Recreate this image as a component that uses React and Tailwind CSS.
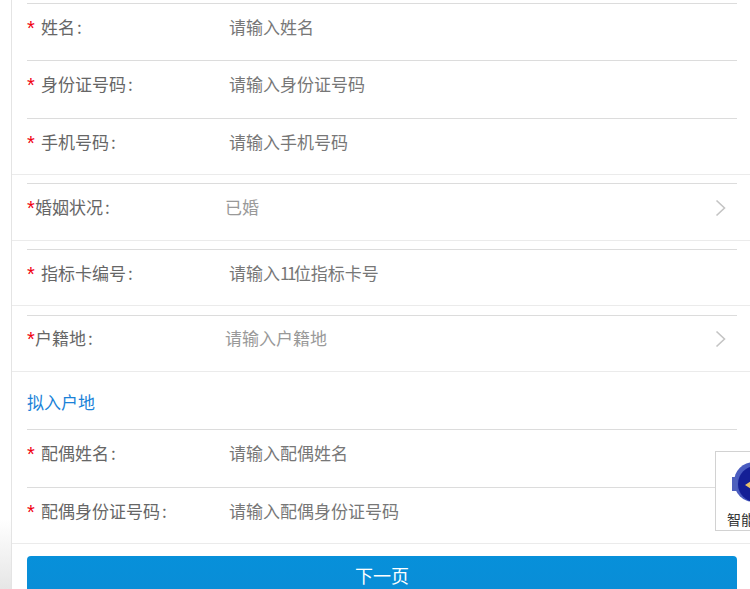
import React from 'react';

const font = "font-['Noto_Sans_CJK_SC','Noto_Sans',sans-serif]";

const Star = ({ width }) => (
  <span className={`h-[16px] text-[20px] leading-[19px] text-[#f0000f] font-['Liberation_Sans',sans-serif] ${width}`}>*</span>
);

const InputRow = ({ label, placeholder, height, pad = 'pb-[11px]' }) => (
  <div className={`ml-[15px] mr-[13px] flex items-center border-t border-[#dcdcdc] ${pad} ${height}`}>
    <div className="flex w-[203px] shrink-0 items-center text-[#666]">
      <Star width="w-[14px]" />
      <span>{label}</span>
      <span className="ml-[2px]">:</span>
    </div>
    <span className="-ml-[1px] text-[#777]">{placeholder}</span>
  </div>
);

const SelectRow = ({ label, value, height }) => (
  <div className={`ml-[15px] mr-[13px] flex items-center border-t border-[#dcdcdc] pb-[11px] ${height}`}>
    <div className="flex w-[198px] shrink-0 items-center text-[#666]">
      <Star width="w-[8px]" />
      <span>{label}</span>
      <span className="ml-[2px]">:</span>
    </div>
    <span className="flex-1 text-[#999]">{value}</span>
    <svg width="12" height="18" viewBox="0 0 12 18" fill="none" className="mr-[10px] mt-[2px]">
      <path d="M1.5 1.5 L9.5 9 L1.5 16.5" stroke="#c4c4c4" strokeWidth="1.6" />
    </svg>
  </div>
);

const Divider = ({ gap }) => <div className={`border-b border-[#ebebeb] ${gap}`} />;

const App = () => {
  return (
    <div className={`relative h-[589px] overflow-hidden bg-white text-[17px] ${font}`}>
      <div className="absolute bottom-0 left-0 h-[70px] w-[11px] bg-gradient-to-b from-white to-[#e6e6e6]" />
      <div className="ml-[11px] h-full border-l border-[#e4e4e4] pt-[3px]">
        <InputRow label="姓名" placeholder="请输入姓名" height="h-[57px]" />
        <InputRow label="身份证号码" placeholder="请输入身份证号码" height="h-[58px]" />
        <InputRow label="手机号码" placeholder="请输入手机号码" height="h-[56px]" pad="pb-[9px]" />
        <Divider gap="mb-[8px]" />
        <SelectRow label="婚姻状况" value="已婚" height="h-[57px]" />
        <Divider gap="mb-[8px]" />
        <InputRow
          label="指标卡编号"
          placeholder={<>请输入<span className="tracking-[-2.5px]">11</span>位指标卡号</>}
          height="h-[56px]"
          pad="pb-[9px]"
        />
        <Divider gap="mb-[9px]" />
        <SelectRow label="户籍地" value="请输入户籍地" height="h-[56px]" />
        <Divider gap="" />
        <div className="ml-[15px] flex h-[57px] items-center pt-[2px] text-[#1a82d8]">拟入户地</div>
        <InputRow label="配偶姓名" placeholder="请输入配偶姓名" height="h-[58px]" />
        <InputRow label="配偶身份证号码" placeholder="请输入配偶身份证号码" height="h-[56px]" pad="pb-[10px]" />
        <Divider gap="mb-[12px]" />
        <button className="ml-[15px] flex h-[41px] w-[710px] items-center justify-center rounded-[4px] bg-gradient-to-b from-[#0790da] to-[#0a8dd6] pb-[3px] text-[18px] text-white">
          下一页
        </button>
      </div>
      {/* recaptcha style badge, runs off the right edge */}
      <div className="absolute left-[715px] top-[451px] h-[80px] w-[60px] border border-[#d2d2d2] bg-white">
        <svg width="48" height="46" viewBox="0 0 48 46" className="absolute left-[15px] top-[9px]">
          <circle cx="23" cy="21" r="20" fill="#4a5cc0" />
          <rect x="1" y="16" width="5" height="14" fill="#4f61bd" />
          <circle cx="25" cy="23" r="18" fill="#141f96" />
          <path d="M14 24 L20 20 L20 28 Z" fill="#e8c06a" />
        </svg>
        <div className="absolute left-[11px] top-[57px] whitespace-nowrap text-[14px] text-[#333]">智能</div>
      </div>
    </div>
  );
};

export default App;
